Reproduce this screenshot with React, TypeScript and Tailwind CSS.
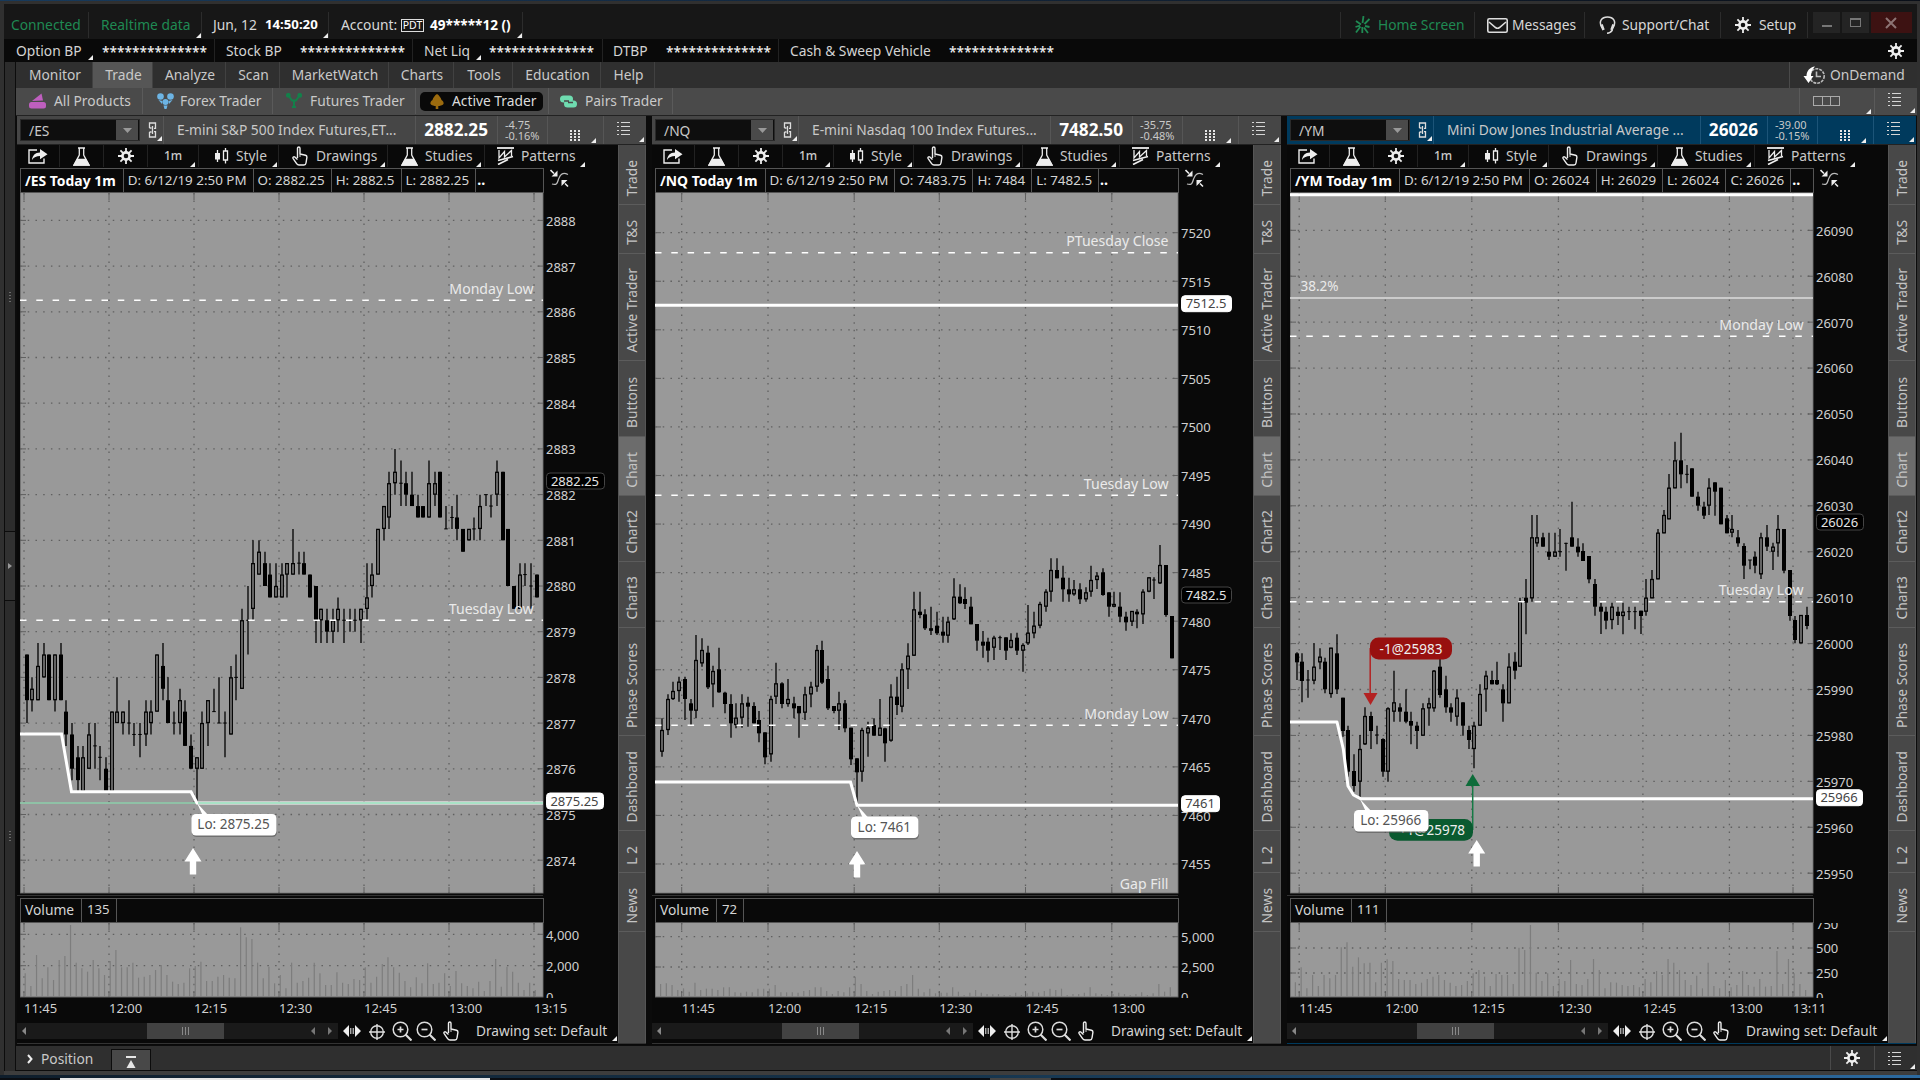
import React from 'react';

// [high, low, bodyTop, bodyBottom, filled]
type Candle = [number, number, number, number, number];

interface Level {
  y: number;
  kind: 'dashed' | 'thick' | 'thin';
  label?: string;
  labelY?: number;
  labelSide?: 'left' | 'right';
}

interface Tag {
  y: number;
  text: string;
  width: number;
  light?: boolean;
}

interface PanelData {
  symbol: string;
  description: string;
  price: string;
  change: string;
  percent: string;
  active?: boolean;
  left: number;
  ohlc: string[];
  ticks: { text: string; y: number }[];
  times: { text: string; x: number }[];
  levels: Level[];
  tags: Tag[];
  candles: Candle[];
  candleX: number;
  candleStep: number;
  base: number;
  unit: number;
  volume: number[];
  volumeValue: string;
  volumeTicks: { text: string; y: number; grid?: boolean }[];
}

const range = (count: number, first: number, step: number, y0: number, dy: number) =>
  Array.from({ length: count }, (_, i) => ({ text: String(first - i * step), y: y0 + i * dy }));

// ES candles are in quarter-point ticks above 2875
const ES_CANDLES: Candle[] = [
  [14, 8, 14, 10, 1], [12, 9, 11, 10, 0], [15, 10, 13, 10, 0], [15, 12, 14, 12, 0], [14, 10, 14, 10, 1],
  [14, 9, 14, 10, 0], [15, 10, 14, 10, 1], [10, 6, 9, 7, 1], [8, 3, 7, 4, 1], [6, 2, 5, 3, 1],
  [6, 2, 5, 2, 0], [8, 4, 7, 4, 0], [8, 4, 6, 6, 0], [6, 3, 5, 5, 0], [5, 2, 4, 2, 1],
  [9, 2, 9, 2, 0], [12, 8, 9, 8, 0], [9, 7, 9, 8, 0], [10, 7, 8, 8, 0], [8, 6, 7, 7, 0],
  [8, 5, 7, 7, 0], [10, 6, 9, 7, 0], [10, 7, 9, 8, 0], [14, 9, 14, 9, 0], [15, 10, 13, 11, 1],
  [12, 8, 10, 8, 1], [9, 7, 8, 8, 0], [11, 7, 10, 8, 0], [10, 6, 9, 6, 1], [7, 4, 6, 4, 1],
  [5, 1, 5, 4, 0], [9, 4, 8, 4, 0], [10, 6, 10, 8, 0], [11, 9, 9, 9, 0], [12, 8, 8, 8, 0],
  [9, 5, 8, 8, 0], [13, 7, 12, 7, 0], [14, 10, 12, 12, 0], [18, 11, 17, 11, 0], [20, 14, 17, 17, 0],
  [24, 17, 22, 18, 0], [24, 21, 23, 21, 0], [23, 20, 22, 20, 1], [22, 19, 21, 19, 1], [22, 19, 20, 19, 0],
  [22, 19, 21, 19, 0], [22, 19, 22, 21, 0], [25, 21, 22, 21, 0], [23, 21, 22, 22, 0], [23, 21, 22, 21, 1],
  [21, 19, 21, 19, 1], [20, 15, 20, 17, 1], [18, 15, 18, 17, 0], [18, 15, 17, 16, 1], [18, 15, 17, 16, 0],
  [19, 16, 18, 17, 0], [18, 15, 17, 17, 0], [18, 16, 17, 17, 0], [18, 16, 17, 17, 0], [18, 15, 18, 17, 0],
  [22, 17, 19, 18, 0], [22, 19, 21, 20, 0], [25, 21, 25, 21, 0], [27, 24, 27, 25, 0], [30, 25, 29, 26, 0],
  [32, 28, 30, 29, 0], [31, 27, 29, 29, 0], [30, 27, 29, 28, 1], [30, 27, 28, 27, 1], [28, 26, 27, 26, 1],
  [27, 26, 27, 26, 1], [31, 26, 29, 26, 0], [30, 27, 29, 28, 0], [30, 26, 30, 26, 1], [27, 25, 25, 25, 0],
  [27, 25, 26, 26, 0], [28, 24, 26, 25, 1], [25, 23, 25, 23, 1], [25, 24, 25, 24, 0], [26, 24, 25, 25, 0],
  [28, 24, 27, 25, 0], [28, 27, 28, 28, 0], [28, 26, 27, 27, 0], [31, 27, 30, 28, 0], [30, 24, 30, 24, 1],
  [25, 20, 25, 20, 1], [20, 18, 20, 18, 1], [22, 18, 21, 18, 0], [22, 20, 21, 21, 0], [22, 18, 20, 20, 0],
  [21, 19, 21, 19, 1],
];

// NQ and YM candles are in thirds of a pixel below the series base
const NQ_CANDLES: Candle[] = [
  [655, 770, 690, 755, 0], [583, 705, 597, 690, 0], [545, 600, 573, 597, 0], [530, 605, 545, 573, 0], [530, 660, 537, 597, 1],
  [597, 675, 610, 632, 1], [405, 655, 480, 632, 0], [415, 500, 450, 490, 0], [437, 567, 458, 562, 1], [497, 622, 513, 553, 0],
  [443, 578, 508, 577, 1], [575, 640, 578, 612, 1], [583, 713, 612, 670, 1], [610, 685, 653, 675, 0], [583, 683, 610, 653, 0],
  [590, 680, 608, 620, 1], [607, 670, 618, 670, 1], [633, 727, 660, 700, 1], [697, 793, 697, 772, 1], [587, 785, 597, 763, 0],
  [488, 612, 550, 590, 0], [547, 625, 550, 612, 1], [537, 620, 597, 612, 0], [590, 655, 610, 625, 1], [618, 713, 618, 640, 1],
  [560, 660, 583, 638, 0], [545, 622, 560, 583, 0], [435, 575, 450, 560, 0], [422, 552, 450, 548, 1], [497, 630, 537, 625, 1],
  [618, 640, 618, 633, 1], [575, 690, 610, 632, 0], [600, 697, 610, 685, 1], [683, 795, 683, 778, 1], [775, 910, 775, 817, 1],
  [683, 845, 690, 815, 0], [665, 770, 683, 700, 0], [655, 707, 675, 707, 1], [597, 707, 683, 707, 0], [683, 785, 685, 730, 1],
  [553, 725, 590, 722, 0], [530, 645, 590, 615, 1], [490, 637, 508, 620, 0], [430, 567, 467, 508, 0], [275, 468, 328, 467, 0],
  [275, 355, 335, 345, 1], [328, 390, 343, 385, 1], [320, 405, 385, 392, 0], [335, 405, 377, 400, 1], [350, 428, 395, 407, 1],
  [350, 428, 365, 407, 0], [235, 360, 290, 358, 0], [253, 312, 290, 310, 1], [262, 327, 297, 312, 1], [290, 373, 320, 373, 1],
  [372, 452, 372, 422, 1], [393, 473, 425, 437, 1], [413, 487, 425, 452, 1], [407, 480, 413, 443, 0], [407, 450, 413, 413, 0],
  [412, 480, 412, 452, 1], [400, 445, 420, 443, 0], [398, 465, 413, 452, 1], [430, 515, 435, 452, 0], [315, 435, 398, 430, 0],
  [335, 415, 377, 400, 0], [305, 385, 312, 377, 0], [268, 335, 275, 320, 0], [175, 305, 210, 275, 0], [175, 235, 210, 235, 1],
  [197, 305, 233, 268, 1], [233, 305, 268, 283, 1], [240, 287, 268, 283, 0], [250, 312, 268, 298, 1], [262, 305, 277, 298, 0],
  [197, 290, 240, 275, 0], [217, 267, 227, 240, 0], [205, 287, 217, 285, 1], [277, 350, 277, 320, 1], [275, 322, 312, 320, 0],
  [277, 367, 320, 350, 1], [335, 392, 350, 367, 1], [333, 378, 333, 365, 0], [328, 385, 335, 343, 1], [268, 372, 275, 343, 0],
  [232, 277, 232, 275, 0], [232, 297, 240, 240, 0], [135, 252, 195, 250, 0], [195, 350, 195, 345, 1], [348, 475, 348, 475, 1],
];

const YM_CANDLES: Candle[] = [
  [757, 840, 760, 787, 1], [760, 907, 785, 843, 1], [810, 893, 840, 840, 0], [730, 853, 800, 842, 0], [745, 808, 770, 787, 0],
  [773, 880, 785, 868, 1], [743, 893, 743, 882, 0], [703, 882, 760, 868, 1], [893, 1010, 893, 993, 1], [977, 1130, 990, 1115, 1],
  [1063, 1175, 1113, 1158, 1], [1005, 1197, 1047, 1145, 0], [922, 1035, 948, 1033, 0], [935, 1047, 948, 993, 1], [977, 1033, 1005, 1005, 0],
  [1015, 1130, 1017, 1115, 1], [922, 1145, 925, 1115, 0], [812, 965, 907, 935, 0], [910, 965, 922, 935, 1], [868, 970, 935, 965, 1],
  [935, 1033, 963, 977, 1], [965, 1047, 977, 993, 1], [910, 1007, 925, 1007, 0], [893, 977, 910, 925, 0], [810, 935, 812, 925, 0],
  [745, 893, 800, 885, 1], [827, 938, 868, 922, 1], [910, 965, 922, 938, 1], [868, 977, 893, 950, 0], [907, 1007, 907, 977, 1],
  [977, 1047, 990, 1020, 1], [965, 1105, 977, 1047, 0], [853, 977, 882, 977, 0], [812, 935, 827, 868, 0], [812, 853, 840, 853, 1],
  [785, 855, 840, 853, 1], [853, 965, 868, 910, 1], [760, 910, 800, 910, 0], [757, 838, 785, 812, 1], [593, 800, 605, 800, 0],
  [537, 703, 593, 608, 1], [345, 605, 412, 595, 0], [345, 440, 412, 430, 0], [398, 440, 412, 440, 1], [398, 480, 455, 470, 1],
  [398, 470, 455, 470, 0], [387, 470, 455, 455, 0], [428, 512, 430, 430, 0], [305, 440, 412, 440, 1], [415, 470, 440, 457, 1],
  [430, 483, 453, 483, 1], [468, 550, 468, 538, 1], [537, 647, 552, 620, 1], [608, 702, 620, 635, 1], [620, 688, 635, 662, 1],
  [608, 688, 620, 660, 0], [620, 675, 635, 648, 1], [608, 703, 635, 648, 0], [620, 660, 635, 635, 0], [620, 688, 635, 635, 0],
  [632, 702, 632, 648, 1], [537, 647, 593, 635, 0], [510, 595, 537, 595, 0], [387, 538, 398, 538, 0], [330, 400, 345, 400, 0],
  [222, 358, 263, 358, 0], [125, 265, 181, 265, 0], [98, 265, 181, 223, 1], [195, 250, 223, 223, 0], [205, 290, 205, 290, 1],
  [275, 332, 290, 317, 1], [305, 357, 320, 347, 1], [235, 345, 263, 317, 0], [247, 347, 247, 275, 1], [263, 373, 263, 373, 1],
  [345, 400, 355, 400, 1], [345, 412, 387, 398, 0], [390, 440, 412, 430, 1], [430, 537, 438, 497, 1], [480, 508, 480, 480, 0],
  [455, 520, 470, 497, 1], [398, 537, 412, 523, 0], [375, 453, 412, 440, 1], [428, 510, 440, 455, 0], [345, 470, 387, 430, 0],
  [387, 520, 387, 512, 1], [510, 662, 510, 648, 1], [648, 730, 660, 720, 1], [645, 730, 645, 730, 0], [620, 688, 645, 678, 1],
];

const ES_VOLUME = [
  280, 318, 225, 295, 262, 300, 240, 228, 135, 248, 265, 275, 240, 265, 285, 243, 210, 262, 262, 248, 293, 290, 285,
  270, 255, 285, 305, 312, 308, 265, 258, 245, 303, 303, 290, 285, 293, 295, 142, 172, 177, 248, 295, 260, 310, 285,
  325, 248, 308, 303, 293, 248, 280, 315, 315, 277, 308, 312, 297, 300, 262, 308, 290, 252, 232, 262, 278, 303, 322,
  292, 310, 250, 312, 308, 280, 318, 273, 310, 318, 325, 305, 333, 303, 237, 320, 260, 275, 308, 330, 308, 330,
];

const NQ_VOLUME = [
  312, 310, 315, 330, 325, 335, 308, 330, 326, 326, 330, 322, 322, 337, 338, 335, 337, 326, 326, 326, 315, 337, 337,
  337, 338, 333, 330, 322, 322, 333, 342, 333, 337, 322, 290, 312, 333, 342, 335, 333, 330, 333, 318, 312, 285, 326,
  337, 326, 340, 338, 338, 322, 335, 345, 338, 330, 338, 342, 343, 342, 345, 345, 338, 345, 340, 335, 338, 333, 326,
  330, 326, 345, 342, 342, 338, 322, 340, 342, 345, 342, 338, 342, 345, 342, 337, 345, 340, 312, 335, 322,
];

const YM_VOLUME = [
  307, 262, 325, 285, 318, 285, 295, 285, 202, 187, 260, 232, 250, 248, 307, 248, 238, 243, 297, 300, 300, 312, 308,
  297, 290, 285, 300, 308, 318, 315, 303, 280, 270, 290, 318, 282, 285, 285, 312, 203, 210, 135, 278, 303, 280, 318,
  297, 303, 240, 312, 315, 297, 237, 270, 325, 307, 308, 315, 318, 315, 322, 297, 307, 273, 285, 237, 248, 270, 300,
  315, 287, 325, 248, 318, 325, 300, 322, 315, 273, 315, 320, 297, 320, 318, 213, 312, 237, 280, 312, 330,
];

const PANELS: PanelData[] = [
  {
    symbol: '/ES',
    description: 'E-mini S&P 500 Index Futures,ET...',
    price: '2882.25',
    change: '-4.75',
    percent: '-0.16%',
    left: 17,
    ohlc: ['D: 6/12/19 2:50 PM', 'O: 2882.25', 'H: 2882.5', 'L: 2882.25'],
    ticks: range(15, 2888, 1, 220.4, 45.7),
    times: [
      { text: '11:45', x: 24 }, { text: '12:00', x: 109 }, { text: '12:15', x: 194 }, { text: '12:30', x: 279 },
      { text: '12:45', x: 364 }, { text: '13:00', x: 449 }, { text: '13:15', x: 534 },
    ],
    levels: [
      { y: 300.3, kind: 'dashed', label: 'Monday Low', labelY: 289 },
      { y: 620.3, kind: 'dashed', label: 'Tuesday Low', labelY: 609 },
    ],
    tags: [
      { y: 481, text: '2882.25', width: 58 },
      { y: 801, text: '2875.25', width: 57, light: true },
    ],
    candles: ES_CANDLES,
    candleX: 26.5,
    candleStep: 5.668,
    base: 814.4,
    unit: -11.42,
    volume: ES_VOLUME,
    volumeValue: '135',
    volumeTicks: [{ text: '4,000', y: 934.3, grid: true }, { text: '2,000', y: 965.7, grid: true }, { text: '0', y: 997 }],
  },
  {
    symbol: '/NQ',
    description: 'E-mini Nasdaq 100 Index Futures...',
    price: '7482.50',
    change: '-35.75',
    percent: '-0.48%',
    left: 652,
    ohlc: ['D: 6/12/19 2:50 PM', 'O: 7483.75', 'H: 7484', 'L: 7482.5'],
    ticks: range(14, 7520, 5, 232.7, 48.56),
    times: [
      { text: '11:45', x: 681.7 }, { text: '12:00', x: 768 }, { text: '12:15', x: 854.2 }, { text: '12:30', x: 939.3 },
      { text: '12:45', x: 1025.5 }, { text: '13:00', x: 1111.8 },
    ],
    levels: [
      { y: 252.7, kind: 'dashed', label: 'PTuesday Close', labelY: 241 },
      { y: 305.3, kind: 'thick' },
      { y: 495.3, kind: 'dashed', label: 'Tuesday Low', labelY: 484 },
      { y: 725.3, kind: 'dashed', label: 'Monday Low', labelY: 714 },
      { y: 900, kind: 'dashed', label: 'Gap Fill', labelY: 884 },
    ],
    tags: [
      { y: 303.7, text: '7512.5', width: 50, light: true },
      { y: 595, text: '7482.5', width: 50 },
      { y: 803.7, text: '7461', width: 38, light: true },
    ],
    candles: NQ_CANDLES,
    candleX: 661.9,
    candleStep: 5.727,
    base: 500,
    unit: 1 / 3,
    volume: NQ_VOLUME,
    volumeValue: '72',
    volumeTicks: [{ text: '5,000', y: 936.7, grid: true }, { text: '2,500', y: 967, grid: true }, { text: '0', y: 997 }],
  },
  {
    symbol: '/YM',
    description: 'Mini Dow Jones Industrial Average ...',
    price: '26026',
    change: '-39.00',
    percent: '-0.15%',
    active: true,
    left: 1287,
    ohlc: ['D: 6/12/19 2:50 PM', 'O: 26024', 'H: 26029', 'L: 26024', 'C: 26026'],
    ticks: range(15, 26090, 10, 230.3, 45.92),
    times: [
      { text: '11:45', x: 1299.2 }, { text: '12:00', x: 1385.3 }, { text: '12:15', x: 1471.8 }, { text: '12:30', x: 1558.4 },
      { text: '12:45', x: 1642.9 }, { text: '13:00', x: 1729.4 }, { text: '13:11', x: 1793 },
    ],
    levels: [
      { y: 194.7, kind: 'thick' },
      { y: 298, kind: 'thin', label: '38.2%', labelY: 286, labelSide: 'left' },
      { y: 336.3, kind: 'dashed', label: 'Monday Low', labelY: 325 },
      { y: 601.7, kind: 'dashed', label: 'Tuesday Low', labelY: 590 },
    ],
    tags: [
      { y: 522, text: '26026', width: 47 },
      { y: 797.7, text: '25966', width: 46, light: true },
    ],
    candles: YM_CANDLES,
    candleX: 1296.7,
    candleStep: 5.733,
    base: 400,
    unit: 1 / 3,
    volume: YM_VOLUME,
    volumeValue: '111',
    volumeTicks: [
      { text: '750', y: 924 }, { text: '500', y: 948, grid: true }, { text: '250', y: 973, grid: true }, { text: '0', y: 997 },
    ],
  },
];

const Corner = ({ className = '' }: { className?: string }) => (
  <svg className={`h-[5px] w-[5px] shrink-0 self-end ${className}`} viewBox="0 0 5 5">
    <path d="M5 0V5H0Z" fill="#eee" />
  </svg>
);

const GearIcon = ({ className = '' }: { className?: string }) => (
  <svg className={`h-4 w-4 shrink-0 ${className}`} viewBox="0 0 16 16" stroke="#eee" fill="none">
    <path d="M8 0V16M0 8H16M2.4 2.4L13.6 13.6M13.6 2.4L2.4 13.6" strokeWidth="1.8" />
    <circle cx="8" cy="8" r="3.6" fill="#111" strokeWidth="2.6" />
  </svg>
);

const ListIcon = ({ className = '' }: { className?: string }) => (
  <svg className={`h-[13px] w-[13px] shrink-0 ${className}`} viewBox="0 0 13 13" fill="#d6d6d6" shapeRendering="crispEdges">
    {[0, 4, 8, 12].map(y => (
      <g key={y}>
        <rect x="0" y={y} width="2" height="1" />
        <rect x="4" y={y} width="9" height="1" />
      </g>
    ))}
  </svg>
);

const FlaskIcon = () => (
  <svg className="h-[19px] w-[17px] shrink-0" viewBox="0 0 17 19" fill="none" stroke="#eee" strokeWidth="1.3">
    <path d="M5 1H12M6.3 1V8L1 18H16L10.7 8V1" />
    <path d="M4.3 12.5H12.7L16 18H1Z" fill="#eee" />
  </svg>
);

const HandIcon = () => (
  <svg className="h-[20px] w-4 shrink-0" viewBox="0 0 16 20" fill="none" stroke="#eee" strokeWidth="1.4" strokeLinejoin="round">
    <path d="M5.5 12V2.2C5.5 0.6 8 0.6 8 2.2V8L13.5 9.3C14.6 9.6 15 10.3 14.9 11.3L14 17C13.8 18.4 13 19 12 19H7C6 19 5.2 18.5 4.6 17.6L1 12.3C0.6 11.2 1.8 10.3 2.8 11L5.5 13.5" />
    <path d="M8 8.5V11" strokeWidth="0.9" />
  </svg>
);

const ShareIcon = () => (
  <svg className="h-4 w-5 shrink-0" viewBox="0 0 20 16" fill="none" stroke="#eee" strokeWidth="1.4">
    <path d="M9 2H1V15H16V10.5" />
    <path d="M4 12C4.5 7.5 7 4.8 12 4.6V1L19.5 6.3L12 11.3V8C8.5 8 6 9 4 12Z" fill="#eee" stroke="none" />
  </svg>
);

const CandlesIcon = () => (
  <svg className="h-4 w-[15px] shrink-0" viewBox="0 0 15 16" fill="none" stroke="#eee" strokeWidth="1.3">
    <path d="M3.5 2V14M11.5 0V3M11.5 12V15.5" />
    <path d="M1 5H6V11.5H1Z" fill="#eee" stroke="none" />
    <path d="M9.5 3H13.5V12H9.5Z" />
  </svg>
);

const PatternsIcon = () => (
  <svg className="h-[18px] w-[17px] shrink-0" viewBox="0 0 17 18" fill="none" stroke="#eee">
    <path d="M0 1H17" strokeWidth="1.8" />
    <path d="M2 3V11L7.5 4.5V10L14.5 3.5V9" strokeWidth="1.3" />
    <path d="M1 13.5L16 9.5M1 17.5L11 12.5" strokeWidth="1.7" />
  </svg>
);

const CollapseIcon = () => (
  <svg className="h-[19px] w-[19px] shrink-0" viewBox="0 0 19 19" fill="none" stroke="#bbb">
    <path d="M2 15C8 17 7.5 12 9 9C10.5 5 13 3 18 5.5" strokeWidth="1.3" />
    <path d="M0.5 1L4 4.5M18 17.5L15 14.5" stroke="#eee" strokeWidth="1.6" />
    <path d="M7.5 1.5V7.5H1.5ZM11.5 17V11H17.5Z" fill="#eee" stroke="none" />
  </svg>
);

const LinkIcon = () => (
  <svg className="h-4 w-[9px] shrink-0" viewBox="0 0 9 16" fill="none" stroke="#ddd" strokeWidth="1.3">
    <path d="M1.5 6V1H7.5V6.3H6M1.5 10V15H7.5V9.7H6M3.5 6H1.5M3.5 10H1.5M4.5 4V12" />
  </svg>
);

const ZoomIcon = ({ minus = false }: { minus?: boolean }) => (
  <svg className="h-5 w-5 shrink-0" viewBox="0 0 20 20" fill="none" stroke="#ddd" strokeWidth="1.5">
    <circle cx="8.5" cy="8.5" r="7.3" />
    <path d="M13.5 13.5L19.5 19.5" strokeWidth="2.2" />
    <path d={minus ? 'M5.5 8.5H11.5' : 'M5.5 8.5H11.5M8.5 5.5V11.5'} strokeWidth="1.7" />
  </svg>
);

const TitleBar = () => (
  <div className="flex h-[35px] bg-[#171717] pb-[1px] pt-2 text-[#d8d8d8]">
    <div className="flex w-[85px] items-center border-r border-[#2c2c2c] pl-[7px] text-[#1f8a53]">Connected</div>
    <div className="flex w-[113px] items-center border-r border-[#2c2c2c] pl-3 text-[#1f8a53]">
      <span className="flex-1 whitespace-nowrap">Realtime data</span>
      <Corner />
    </div>
    <div className="flex w-[127px] items-center border-r border-[#2c2c2c] pl-[11px]">
      <span className="w-[52px]">Jun, 12</span>
      <b className="flex-1 text-[13.2px] text-white">14:50:20</b>
      <Corner />
    </div>
    <div className="flex w-[194px] items-center border-r border-[#2c2c2c] pl-3">
      <span className="w-[60px]">Account:</span>
      <span className="mr-[6px] flex h-[13px] w-[23px] items-center justify-center border border-[#ddd] text-[10.5px] text-white">PDT</span>
      <b className="flex-1 whitespace-nowrap text-[13.6px] text-white">49*****12 ()</b>
      <Corner />
    </div>
    <div className="flex-1" />
    <div className="flex w-[135px] items-center border-x border-[#2c2c2c] pl-[14px] text-[#1f8a53]">
      <svg className="mr-2 h-[18px] w-[15px]" viewBox="0 0 15 18" stroke="#1f8a53" strokeWidth="1.8" fill="none">
        <path d="M8.5 0L7.5 7M14.5 3L9.5 8M1 5L6 8.5M10 10L14.5 11M9 11.5L13 17M7.3 11V17M5.5 10.5L1 16.5M5 9.5L0.5 11" />
      </svg>
      Home Screen
    </div>
    <div className="flex w-[110px] items-center border-r border-[#2c2c2c] pl-3">
      <svg className="mr-1 h-[15px] w-[21px]" viewBox="0 0 21 15" stroke="#ddd" strokeWidth="1.6" fill="none">
        <rect x="0.8" y="0.8" width="19.4" height="13.4" rx="1.5" />
        <path d="M2 4L8.5 9.5Q10.5 11 12.5 9.5L19 4" />
      </svg>
      Messages
    </div>
    <div className="flex w-[136px] items-center border-r border-[#2c2c2c] pl-[14px]">
      <svg className="mr-[6px] h-[18px] w-[17px]" viewBox="0 0 17 18" stroke="#ddd" strokeWidth="1.5" fill="none">
        <path d="M3 12C-1 5 3 1 8.5 1S18 5 14 12" />
        <path d="M2.5 8.5L4.5 14M14.5 8.5L12.5 14" strokeWidth="2.6" />
        <path d="M13.5 14Q11.5 17 8 17.2" />
      </svg>
      Support/Chat
    </div>
    <div className="flex w-[87px] items-center border-r border-[#2c2c2c] pl-[14px]">
      <GearIcon className="mr-2" />
      Setup
    </div>
    <div className="flex gap-[2px] px-[5px]">
      <div className="flex h-[21px] w-[27px] items-end justify-center bg-[#242424] pb-[6px]">
        <div className="h-[2px] w-[10px] bg-[#777]" />
      </div>
      <div className="flex h-[21px] w-[27px] items-center justify-center bg-[#242424]">
        <div className="h-[9px] w-[11px] border border-t-2 border-[#777]" />
      </div>
      <div className="flex h-[21px] w-[41px] items-center justify-center bg-[#3d1212] pr-[2px]">
        <svg className="h-3 w-3" viewBox="0 0 12 12" stroke="#8c7474" strokeWidth="2">
          <path d="M1 1L11 11M11 1L1 11" />
        </svg>
      </div>
    </div>
  </div>
);

const BALANCES = [
  { label: 'Option BP', width: 'w-[211px] pl-[12px]', labelWidth: 'w-[86px]', corner: true },
  { label: 'Stock BP', width: 'w-[198px] pl-[11px]', labelWidth: 'w-[74px]' },
  { label: 'Net Liq', width: 'w-[190px] pl-[11px]', labelWidth: 'w-[65px]', corner: true },
  { label: 'DTBP', width: 'w-[176px] pl-[10px]', labelWidth: 'w-[53px]' },
  { label: 'Cash & Sweep Vehicle', width: 'w-[280px] pl-[11px]', labelWidth: 'w-[159px]', last: true },
];

const BalanceBar = () => (
  <div className="flex h-[23px] bg-[#090909] text-[#d4d4d4]">
    {BALANCES.map(b => (
      <div key={b.label} className={`flex items-center ${b.width} ${b.last ? '' : 'border-r border-[#222]'}`}>
        <div className={`flex h-full items-center ${b.labelWidth}`}>
          <span className="whitespace-nowrap">{b.label}</span>
          {b.corner && <Corner className="mb-[2px] ml-[6px]" />}
        </div>
        <span className="mt-[2px] text-[13.7px] font-medium text-[#eee]">**************</span>
      </div>
    ))}
    <div className="flex-1" />
    <div className="flex items-center pr-[13px]">
      <GearIcon />
    </div>
  </div>
);

const MAIN_TABS = [
  { label: 'Monitor', width: 'w-[77px]' },
  { label: 'Trade', width: 'w-[60px]', active: true },
  { label: 'Analyze', width: 'w-[73px]' },
  { label: 'Scan', width: 'w-[54px]' },
  { label: 'MarketWatch', width: 'w-[109px]' },
  { label: 'Charts', width: 'w-[65px]' },
  { label: 'Tools', width: 'w-[59px]' },
  { label: 'Education', width: 'w-[88px]' },
  { label: 'Help', width: 'w-[54px]' },
];

const MainTabs = () => (
  <div className="flex h-[26px] bg-[#2f2f2f] text-[#c9c9c9]">
    {MAIN_TABS.map(t => (
      <div key={t.label} className={`flex items-center justify-center border-r border-[#414141] pl-[2px] ${t.width} ${t.active ? 'bg-[#565656]' : ''}`}>
        {t.label}
      </div>
    ))}
    <div className="flex-1" />
    <div className="flex w-[128px] items-center border-l border-[#4a4a4a] pl-[13px]">
      <svg className="mr-[5px] h-[19px] w-[22px]" viewBox="0 0 22 19" fill="none" stroke="#bbb" strokeWidth="1.6">
        <circle cx="14" cy="10" r="7.2" strokeDasharray="3 1" />
        <path d="M13.5 5.5V10.5H18" />
        <path d="M12 0.5C7 1 3.5 5 3.5 10H0.5L5.5 17L10.5 10H8C8 6 9.5 3 12 0.5Z" fill="#fff" stroke="none" />
      </svg>
      OnDemand
    </div>
  </div>
);

const SubTabs = () => (
  <div className="flex h-[27px] bg-[#4a4a4a] pb-[1px] text-[#c9c9c9]">
    <div className="flex w-[127px] items-center border-r border-[#5a5a5a] pl-[13px]">
      <svg className="mr-2 h-4 w-[17px]" viewBox="0 0 17 16" fill="#bf5fbf">
        <path d="M3 8L12.5 0.5L14 7.5Z" />
        <rect y="9" width="17" height="6.5" rx="2.5" />
      </svg>
      All Products
    </div>
    <div className="flex w-[130px] items-center border-r border-[#5a5a5a] pl-[14px]">
      <svg className="mr-[6px] h-4 w-[17px]" viewBox="0 0 17 16" fill="#6cb4e4">
        <circle cx="3.5" cy="3.5" r="3.3" />
        <circle cx="13.5" cy="3.5" r="3.3" />
        <circle cx="8.5" cy="9" r="3" />
        <path d="M6.5 12.5H10.5L9.5 16H7.5ZM1.5 7L5 11L5.5 8ZM15.5 7L12 11L11.5 8Z" />
      </svg>
      Forex Trader
    </div>
    <div className="flex w-[143px] items-center border-r border-[#5a5a5a] pl-[13px]">
      <svg className="mr-2 h-4 w-4" viewBox="0 0 16 16" stroke="#13804a" strokeWidth="2" fill="#13804a">
        <path d="M2.5 2.5L6 7.5H10L13.5 2.5M8 8V14" fill="none" />
        <circle cx="2.3" cy="2.3" r="1.4" />
        <circle cx="13.7" cy="2.3" r="1.4" />
        <path d="M6 14H10" />
      </svg>
      Futures Trader
    </div>
    <div className="flex w-[133px] items-center border-r border-[#5a5a5a] pl-1">
      <div className="flex h-[19px] w-[123px] items-center rounded-[5px] bg-[#090909] pl-[10px] text-[#dcdcdc]">
        <svg className="mr-2 h-[15px] w-[14px]" viewBox="0 0 14 15" fill="#9c6b0e">
          <path d="M7 0C9 1 11 4 11.5 6C13 7 14 8.5 13.5 10C12.5 11.5 9.5 12 8.3 12V15H5.7V12C4.5 12 1.5 11.5 0.5 10C0 8.5 1 7 2.5 6C3 4 5 1 7 0Z" />
        </svg>
        Active Trader
      </div>
    </div>
    <div className="flex w-[124px] items-center border-r border-[#5a5a5a] pl-[11px]">
      <svg className="mr-2 h-[13px] w-[17px]" viewBox="0 0 17 13" fill="#6fdcb0">
        <rect x="0" y="0.5" width="13" height="7" rx="3.5" />
        <rect x="4" y="5.5" width="13" height="7" rx="3.5" />
        <path d="M4 6H9M8 7.5H13" stroke="#4a4a4a" strokeWidth="1.3" />
      </svg>
      Pairs Trader
    </div>
    <div className="flex-1" />
    <div className="flex w-[75px] items-center border-l border-[#5a5a5a] pl-[13px]">
      <div className="flex h-[10px] w-[27px] border border-[#aaa]">
        <div className="flex-1 border-r border-[#aaa]" />
        <div className="flex-1 border-r border-[#aaa]" />
        <div className="flex-1" />
      </div>
      <Corner className="ml-auto mr-[3px]" />
    </div>
    <div className="flex w-[43px] items-center border-l border-[#5a5a5a] pl-[13px]">
      <ListIcon className="mb-[3px]" />
      <Corner className="mb-[1px] ml-auto mr-[2px]" />
    </div>
  </div>
);

const PanelHeader = ({ panel }: { panel: PanelData }) => {
  const line = panel.active ? 'border-[#1c5478]' : 'border-[#565656]';
  return (
    <div className={`flex h-[29px] items-stretch border-b border-[#222] text-[#c9c9c9] ${panel.active ? 'bg-[#003a5d]' : 'bg-[#464646]'}`}>
      <div className="flex w-[146px] items-center pl-[3px]">
        <div className="flex h-[22px] w-[120px] items-center border border-[#2a2a2a] bg-[#0e0e0e] pl-2">
          <span className="flex-1 pt-px">{panel.symbol}</span>
          <div className="mr-px flex h-full w-[22px] items-center justify-center bg-[#4a4a4a]">
            <svg className="h-[5px] w-[9px]" viewBox="0 0 9 5" fill="#999">
              <path d="M0 0H9L4.5 5Z" />
            </svg>
          </div>
        </div>
        <div className="ml-2 flex">
          <LinkIcon />
          <Corner className="-mb-[3px]" />
        </div>
      </div>
      <div className={`flex flex-1 items-center whitespace-nowrap border-l pl-[13px] ${line}`}>{panel.description}</div>
      <div className={`flex items-center border-l pl-2 pr-[9px] text-[17.2px] font-bold text-white ${line}`}>{panel.price}</div>
      <div className={`flex w-[50px] flex-col justify-center border-l pb-px pl-[7px] text-[11px] leading-[11px] ${line}`}>
        <span>{panel.change}</span>
        <span>{panel.percent}</span>
      </div>
      <div className={`flex w-[56px] items-center border-l pl-[22px] ${line}`}>
        <svg className="mt-[10px] h-[11px] w-[10px]" viewBox="0 0 10 11" fill="#e6e6e6" shapeRendering="crispEdges">
          {[0, 1, 2, 3].map(r => [0, 1, 2].map(c => <rect key={`${r}-${c}`} x={c * 4} y={r * 3} width="2" height="2" />))}
        </svg>
        <Corner className="mb-[1px] ml-auto mr-[7px]" />
      </div>
      <div className={`flex w-[43px] items-center border-l pl-[13px] ${line}`}>
        <ListIcon className="mb-[3px]" />
        <Corner className="mb-[2px] ml-auto mr-[2px]" />
      </div>
    </div>
  );
};

const Toolbar = () => (
  <div className="flex h-[23px] bg-[#090909] pb-[1px] text-[#c9c9c9]">
    <div className="flex w-[43px] items-center border-r border-[#222] pl-[11px]"><ShareIcon /></div>
    <div className="flex w-[44px] items-center border-r border-[#222] pl-[13px]"><FlaskIcon /></div>
    <div className="flex w-[44px] items-center border-r border-[#222] pl-[14px]"><GearIcon /></div>
    <div className="flex w-[51px] items-center border-r border-[#222] pl-[16px] text-[12px] font-medium">
      <span className="flex-1">1m</span>
      <Corner className="mr-[3px]" />
    </div>
    <div className="flex w-[80px] items-center border-r border-[#222] pl-[15px]">
      <CandlesIcon />
      <span className="ml-[7px] flex-1">Style</span>
      <Corner className="mr-[1px]" />
    </div>
    <div className="flex w-[109px] items-center border-r border-[#222] pl-[13px]">
      <HandIcon />
      <span className="ml-[8px] flex-1">Drawings</span>
      <Corner className="mr-[2px]" />
    </div>
    <div className="flex w-[97px] items-center border-r border-[#222] pl-[13px]">
      <FlaskIcon />
      <span className="ml-[7px] flex-1">Studies</span>
      <Corner className="mr-[3px]" />
    </div>
    <div className="flex w-[101px] items-center pl-[12px]">
      <PatternsIcon />
      <span className="ml-[7px] flex-1">Patterns</span>
      <Corner className="mr-[1px]" />
    </div>
  </div>
);

const InfoRow = ({ panel }: { panel: PanelData }) => (
  <div className="flex h-[25px] bg-[#090909] pl-[3px]">
    <div className="flex w-[524px] overflow-hidden border border-[#555] text-[13.4px] text-[#d4d4d4]">
      <div className="flex shrink-0 items-center whitespace-nowrap border-r border-[#555] pl-[4px] pr-[7px] text-[13.9px] font-bold text-white">
        {panel.symbol} Today 1m
      </div>
      {panel.ohlc.map(o => (
        <div key={o} className="flex shrink-0 items-center whitespace-nowrap border-r border-[#555] pl-[4px] pr-[6px]">{o}</div>
      ))}
      <b className="self-center pl-[1px] text-[14.2px] text-white">..</b>
    </div>
    <div className="pl-[6px] pt-[1px]"><CollapseIcon /></div>
  </div>
);

const UpArrow = ({ x, y }: { x: number; y: number }) => (
  <path d={`M${x} ${y}l8.5 13.5h-5.3v13h-6.4v-13h-5.3z`} fill="#fff" />
);

const Callout = ({ x, y, width, tipX, tipY, text }: { x: number; y: number; width: number; tipX: number; tipY: number; text: string }) => (
  <g>
    <path d={`M${tipX} ${tipY}L${tipX + 6} ${y + 2}H${tipX + 12}Z`} fill="#fff" />
    <rect x={x + 0.5} y={y + 1} width={width} height={22} rx={4.5} fill="#555" opacity="0.6" />
    <rect x={x} y={y} width={width} height={21.5} rx={4.5} fill="#fff" />
    <text x={x + width / 2 - 0.5} y={y + 15.4} textAnchor="middle" fontSize="13.5" fill="#555">{text}</text>
  </g>
);

const Annotations = ({ symbol }: { symbol: string }) => {
  if (symbol === '/ES') {
    return (
      <g>
        <path d="M20 803H197" stroke="#8ccfab" strokeWidth="1.5" />
        <path d="M20 734H61.5L71.5 791.7H191L197 803H543" fill="none" stroke="#fff" strokeWidth="3" />
        <path d="M198 803H543" stroke="#a9e2c6" strokeWidth="1.8" />
        <Callout x={191.5} y={814} width={85} tipX={197} tipY={803} text="Lo: 2875.25" />
        <UpArrow x={193} y={848} />
      </g>
    );
  }
  if (symbol === '/NQ') {
    return (
      <g>
        <path d="M655 782H850.5L857 805.3H1178" fill="none" stroke="#fff" strokeWidth="3" />
        <Callout x={851} y={816.5} width={67.5} tipX={857} tipY={805} text="Lo: 7461" />
        <UpArrow x={857} y={851} />
      </g>
    );
  }
  return (
    <g>
      <path d="M1290 722H1337L1343.3 749L1348 786L1353.5 795L1360.5 798.7H1813" fill="none" stroke="#fff" strokeWidth="3" strokeLinejoin="round" />
      <path d="M1370.2 648V695" stroke="#b32222" strokeWidth="1.5" />
      <path d="M1363.5 693H1377.5L1370.5 705Z" fill="#b32222" />
      <rect x="1370" y="637.5" width="82" height="22" rx="8.5" fill="#98100f" />
      <text x="1411" y="653.6" textAnchor="middle" fontSize="13.5" fill="#eee">-1@25983</text>
      <path d="M1472.7 830V785" stroke="#157a45" strokeWidth="1.5" />
      <path d="M1465.5 786H1480L1472.7 774Z" fill="#0d6c3a" />
      <rect x="1389" y="819" width="84" height="21.7" rx="8.5" fill="#0a5a30" />
      <text x="1432" y="834.8" textAnchor="middle" fontSize="13.5" fill="#eee">+1@25978</text>
      <Callout x={1354} y={810} width={74.5} tipX={1360} tipY={799} text="Lo: 25966" />
      <UpArrow x={1476.7} y={840} />
    </g>
  );
};

const PriceChart = ({ panel }: { panel: PanelData }) => {
  const x0 = panel.left + 3;
  const x1 = panel.left + 526;
  const toY = (v: number) => panel.base + v * panel.unit;
  return (
    <svg className="block h-[701px] w-[601px] bg-[#090909]" viewBox={`${panel.left} 193 601 701`}>
      <rect x={x0} y={193} width={523.5} height={700.5} fill="#666" />
      <rect x={x0 + 0.7} y={193} width={522} height={699.7} fill="#999" />
      {panel.ticks.map(t => (
        <g key={t.text} stroke="#606060">
          <path d={`M${x0} ${t.y}H${x1}`} strokeDasharray="1.5 6.23" strokeWidth="1.3" />
          <path d={`M${x0} ${t.y}h6M${x1} ${t.y}h-5.5`} />
        </g>
      ))}
      {panel.times.map(t => (
        <g key={t.text} stroke="#606060">
          <path d={`M${t.x} 193V893`} strokeDasharray="1.5 6.1" strokeWidth="1.3" />
          <path d={`M${t.x} 193v7M${t.x} 893v-6`} />
        </g>
      ))}
      {panel.candles.map(([h, l, top, bottom, filled], i) => {
        const x = Math.round(panel.candleX + i * panel.candleStep);
        const yTop = toY(top);
        const yBottom = toY(bottom);
        const flat = yBottom - yTop < 1;
        return (
          <g key={i}>
            <path d={`M${x} ${toY(h)}V${toY(l)}`} stroke="#000" strokeWidth="1.3" />
            {flat ? (
              <path d={`M${x - 1.8} ${yTop}h3.6`} stroke="#000" />
            ) : filled ? (
              <rect x={x - 2} y={yTop} width={4} height={yBottom - yTop} fill="#000" />
            ) : (
              <rect x={x - 1.3} y={yTop + 0.5} width={2.6} height={yBottom - yTop - 1} fill="#999" stroke="#000" strokeWidth="1.3" />
            )}
          </g>
        );
      })}
      {panel.levels.map(level => (
        <g key={level.y}>
          <path
            d={`M${x0} ${level.y}H${x1}`}
            stroke={level.kind === 'thin' ? '#ddd' : '#fff'}
            strokeWidth={level.kind === 'thick' ? 3 : 1.5}
            strokeDasharray={level.kind === 'dashed' ? '6.5 9.8' : undefined}
          />
          {level.label && (
            <text
              x={level.labelSide === 'left' ? x0 + 10.5 : x1 - 9.5}
              y={(level.labelY ?? 0) + 4.8}
              textAnchor={level.labelSide === 'left' ? 'start' : 'end'}
              fontSize={level.labelSide === 'left' ? 13.5 : 14.1}
              fill="#eaeaea"
            >
              {level.label}
            </text>
          )}
        </g>
      ))}
      <Annotations symbol={panel.symbol} />
      {panel.ticks.map(t => (
        <text key={t.text} x={x1 + 3} y={t.y + 5.4} fontSize="13" fill="#d0d0d0">{t.text}</text>
      ))}
      {panel.tags.map(tag => (
        <g key={tag.text}>
          <rect
            x={x1 + 3.5}
            y={tag.y - 8}
            width={tag.width}
            height={16}
            rx={3.5}
            fill={tag.light ? '#fff' : '#000'}
            stroke={tag.light ? '#fff' : '#444'}
          />
          <text x={x1 + 3 + tag.width / 2} y={tag.y + 4.6} textAnchor="middle" fontSize="13" fill={tag.light ? '#444' : '#e4e4e4'}>
            {tag.text}
          </text>
        </g>
      ))}
    </svg>
  );
};

const VolumeChart = ({ panel }: { panel: PanelData }) => {
  const x0 = panel.left + 3;
  const x1 = panel.left + 526;
  return (
    <div className="bg-[#090909]">
      <svg className="block h-[75px] w-[601px]" viewBox={`${panel.left} 923 601 75`}>
        <rect x={x0} y={923} width={523.5} height={74.5} fill="#666" />
        <rect x={x0 + 0.7} y={923} width={522} height={73.5} fill="#999" />
        {panel.volumeTicks.filter(t => t.grid).map(t => (
          <g key={t.text} stroke="#606060">
            <path d={`M${x0} ${t.y}H${x1}`} strokeDasharray="1.5 6.23" strokeWidth="1.3" />
            <path d={`M${x0} ${t.y}h6M${x1} ${t.y}h-5.5`} />
          </g>
        ))}
        {panel.times.map(t => (
          <g key={t.text} stroke="#606060">
            <path d={`M${t.x} 923V997`} strokeDasharray="1.5 6.1" strokeWidth="1.3" />
            <path d={`M${t.x} 923v7M${t.x} 997v-6`} />
          </g>
        ))}
        {panel.volume.map((v, i) => {
          const x = panel.candleX - 1.3 + i * panel.candleStep;
          return <path key={i} d={`M${x} ${880 + v / 3}V996.5`} stroke="#7d7d7d" strokeWidth="1.2" />;
        })}
        {panel.volumeTicks.map(t => (
          <text key={t.text} x={x1 + 3} y={t.y + 5.4} fontSize="13" fill="#d0d0d0">{t.text}</text>
        ))}
      </svg>
      <svg className="block h-6 w-[601px]" viewBox={`${panel.left} 998 601 24`}>
        {panel.times.map(t => (
          <text key={t.text} x={t.x} y={1013.4} fontSize="13" fill="#d0d0d0">{t.text}</text>
        ))}
      </svg>
    </div>
  );
};

const ChartFooter = () => (
  <div className="flex h-[21px] items-center bg-[#090909] pb-[3px] text-[#d4d4d4]">
    <div className="flex h-4 w-[321px] items-center bg-[#1a1a1a]">
      <svg className="ml-[5px] h-2 w-1" viewBox="0 0 4 8" fill="#888"><path d="M4 0V8L0 4Z" /></svg>
      <div className="ml-[121px] flex h-full w-[77px] items-center justify-center gap-[2px] bg-[#424242]">
        <div className="h-2 w-px bg-[#888]" />
        <div className="h-2 w-px bg-[#888]" />
        <div className="h-2 w-px bg-[#888]" />
      </div>
      <svg className="ml-[87px] h-2 w-1" viewBox="0 0 4 8" fill="#777"><path d="M4 0V8L0 4Z" /></svg>
      <svg className="ml-[13px] h-2 w-1" viewBox="0 0 4 8" fill="#777"><path d="M0 0V8L4 4Z" /></svg>
    </div>
    <svg className="ml-[5px] h-3 w-[18px]" viewBox="0 0 18 12" fill="#eee">
      <path d="M6 0V12L0 6ZM12 0V12L18 6ZM7.3 3h1v6h-1zM9.7 3h1v6h-1z" />
    </svg>
    <svg className="ml-[8px] mt-[2px] h-4 w-4" viewBox="0 0 16 16" fill="none" stroke="#ddd" strokeWidth="1.4">
      <circle cx="8" cy="8" r="6.3" />
      <path d="M8 0V16M0 8H16" />
    </svg>
    <div className="ml-[7px]"><ZoomIcon /></div>
    <div className="ml-[4px]"><ZoomIcon minus /></div>
    <div className="ml-[7px]"><HandIcon /></div>
    <span className="ml-[17px] whitespace-nowrap text-[13.7px]">Drawing set: Default</span>
    <Corner className="-mb-[1px] ml-auto mr-px" />
  </div>
);

const SIDE_TABS = [
  { label: 'Trade', height: 'h-[60px]' },
  { label: 'T&S', height: 'h-[49px]' },
  { label: 'Active Trader', height: 'h-[107px]' },
  { label: 'Buttons', height: 'h-[76px]' },
  { label: 'Chart', height: 'h-[59px]', active: true },
  { label: 'Chart2', height: 'h-[66px]' },
  { label: 'Chart3', height: 'h-[66px]' },
  { label: 'Phase Scores', height: 'h-[108px]' },
  { label: 'Dashboard', height: 'h-[95px]' },
  { label: 'L 2', height: 'h-[42px]' },
  { label: 'News', height: 'h-[59px]' },
];

const SideTabs = () => (
  <div className="flex w-[28px] flex-col border-x border-[#555] bg-[#484848] text-[#c4c4c4]">
    {SIDE_TABS.map(t => (
      <div key={t.label} className={`flex shrink-0 items-center justify-center border-b border-[#5c5c5c] pt-[7px] ${t.height} ${t.active ? 'bg-[#6c6c6c]' : ''}`}>
        <span className="rotate-180 whitespace-nowrap [writing-mode:vertical-rl]">{t.label}</span>
      </div>
    ))}
  </div>
);

const Panel = ({ panel }: { panel: PanelData }) => (
  <div className={`flex w-[629px] shrink-0 flex-col ${panel.active ? 'border-b border-[#003a5d]' : 'border-b border-[#333]'}`}>
    <PanelHeader panel={panel} />
    <div className="flex">
      <div className="w-[601px]">
        <Toolbar />
        <InfoRow panel={panel} />
        <PriceChart panel={panel} />
        <div className="h-1 bg-[#090909] pt-[1px]">
          <div className="h-px w-[526px] bg-[#333]" />
        </div>
        <div className="h-[25px] bg-[#090909] pl-[3px]">
          <div className="flex h-[25px] w-[524px] border border-[#555] text-[#d4d4d4]">
            <div className="flex w-[61px] items-center border-r border-[#555] pb-px pl-1">Volume</div>
            <div className="flex items-center border-r border-[#555] pb-px pl-[5px] pr-[6px] text-[13.2px]">{panel.volumeValue}</div>
          </div>
        </div>
        <VolumeChart panel={panel} />
        <ChartFooter />
      </div>
      <SideTabs />
    </div>
  </div>
);

const RailGrip = () => (
  <div className="flex flex-col gap-[2px]">
    {[0, 1, 2, 3].map(i => <div key={i} className="h-px w-[2px] bg-[#6a6a6a]" />)}
  </div>
);

const LeftRail = () => (
  <div className="flex w-3 flex-col border-x border-[#0c0c0c] bg-[#2c2c2c]">
    <div className="flex h-[469px] items-center justify-center"><RailGrip /></div>
    <div className="flex h-[70px] items-center justify-center border-y border-[#0c0c0c] bg-[#313131]">
      <svg className="h-[6px] w-1" viewBox="0 0 4 6" fill="#999"><path d="M0 0V6L4 3Z" /></svg>
    </div>
    <div className="flex h-[470px] items-center justify-center"><RailGrip /></div>
  </div>
);

const StatusBar = () => (
  <div className="flex h-[26px] border-y border-[#0c0c0c] bg-[#2f2f2f] text-[#c9c9c9]">
    <div className="flex w-[95px] items-center pl-[11px] pt-px">
      <svg className="mr-2 h-[10px] w-[6px]" viewBox="0 0 6 10" fill="none" stroke="#eee" strokeWidth="2"><path d="M1 1L4.5 5L1 9" /></svg>
      Position
    </div>
    <div className="mt-[3px] flex w-10 items-center justify-center border border-b-0 border-[#0c0c0c] bg-[#484848]">
      <svg className="mt-1 h-3 w-[10px]" viewBox="0 0 10 12" fill="#e6e6e6"><path d="M0 0H10V2H0ZM5 4L9.5 12H0.5Z" /></svg>
    </div>
    <div className="flex-1" />
    <div className="flex w-[44px] items-center border-l border-[#4a4a4a] pl-[13px]"><GearIcon /></div>
    <div className="flex w-[43px] items-center border-l border-[#4a4a4a] pl-[13px]">
      <ListIcon />
      <Corner className="mb-[1px] ml-auto mr-[2px]" />
    </div>
  </div>
);

export default function App() {
  return (
    <div className="flex h-[1080px] w-[1920px] flex-col overflow-hidden bg-[#0d1a26] font-['Noto_Sans',sans-serif] text-[13.8px] leading-none">
      <div className="h-px bg-linear-to-r from-[#173a5c] to-[#0a0f18]" />
      <div className="flex h-[1074px] w-[1920px] flex-col border-l-[4px] border-r-[3px] border-t-[3px] border-[#303030] bg-[#090909]">
        <TitleBar />
        <BalanceBar />
        <div className="flex h-[1009px]">
          <LeftRail />
          <div className="flex flex-1 flex-col">
            <MainTabs />
            <SubTabs />
            <div className="flex h-[929px] gap-[6px] border-t border-[#222] bg-[#0b0b0b] pl-[1px]">
              {PANELS.map(panel => <Panel key={panel.symbol} panel={panel} />)}
            </div>
            <div className="h-px" />
            <StatusBar />
          </div>
        </div>
        <div className="h-1 bg-[#3d3d3d]" />
      </div>
      <div className="flex h-[5px] flex-col justify-end bg-linear-to-r from-[#0f1e2c] via-[#16344c] to-[#2c6aa0]">
        <div className="flex h-[2px] bg-[#0a0d12] pl-[60px]">
          <div className="w-[430px] bg-[#e4e4e4]" />
          <div className="ml-[500px] w-[61px] bg-[#444]" />
        </div>
      </div>
    </div>
  );
}
